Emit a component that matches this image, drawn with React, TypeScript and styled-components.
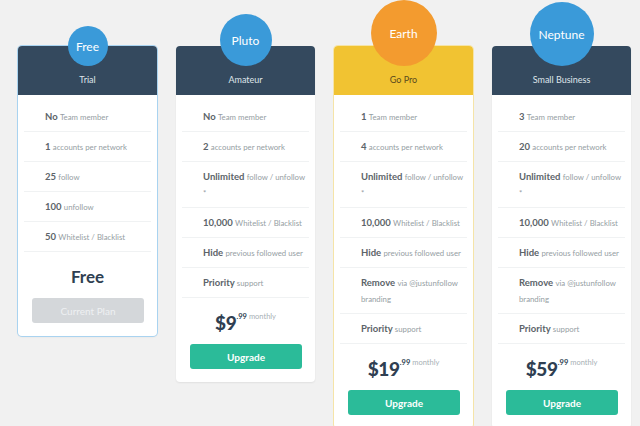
import React from "react";
import styled, { createGlobalStyle, css } from "styled-components";

const Global = createGlobalStyle`
  html, body { margin: 0; padding: 0; background: #f1f1f1; }
  body { font-family: Lato, "Open Sans", "Liberation Sans", sans-serif; -webkit-font-smoothing: antialiased; }
`;

type Variant = "current" | "plain" | "featured";

interface Feature { strong: string; light: React.ReactNode; }
interface Plan {
  badge: string;
  size: number;
  title: string;
  variant: Variant;
  features: Feature[];
  whole?: string;
  button: string;
}

const Page = styled.div`
  display: flex;
  align-items: flex-start;
  gap: 19px;
  padding: 46px 0 0 18px;
  width: 640px;
  height: 426px;
  box-sizing: border-box;
  overflow: hidden;
`;

const Card = styled.div<{ $variant: Variant }>`
  width: 139px;
  flex: none;
  background: #fff;
  border-radius: 4px;
  box-shadow: 0 1px 2px rgba(0, 0, 0, 0.07);
  ${(p) =>
    p.$variant === "current" &&
    css`
      box-shadow: 0 0 0 1px #a9d3f0, 0 1px 2px rgba(0, 0, 0, 0.08);
    `}
  ${(p) =>
    p.$variant === "featured" &&
    css`
      box-shadow: 0 0 0 1px #f5e4a8, 0 1px 2px rgba(0, 0, 0, 0.06);
    `}
`;

const Header = styled.div<{ $variant: Variant }>`
  height: 49px;
  border-radius: 4px 4px 0 0;
  background: ${(p) => (p.$variant === "featured" ? "#f1c332" : "#34495e")};
  display: flex;
  flex-direction: column;
  align-items: center;
`;

const Badge = styled.div<{ $size: number; $featured: boolean }>`
  width: ${(p) => p.$size}px;
  height: ${(p) => p.$size}px;
  margin-top: ${(p) => 20 - p.$size}px;
  border-radius: 50%;
  background: ${(p) => (p.$featured ? "#f39b2f" : "#3a9ad9")};
  color: #fff;
  font-size: 12px;
  font-weight: 400;
  display: flex;
  align-items: center;
  justify-content: center;
  flex: none;
`;

const Title = styled.div<{ $featured: boolean }>`
  margin-top: 8px;
  font-size: 9px;
  line-height: 12px;
  color: ${(p) => (p.$featured ? "#5b4a1e" : "#dfe5ea")};
`;

const List = styled.ul`
  list-style: none;
  margin: 0;
  padding: 7px 6px 0;
`;

const Row = styled.li`
  padding: 7px 0 6px 21px;
  line-height: 16px;
  border-bottom: 1px solid #f0f2f3;
  font-size: 9.5px;
  font-weight: 700;
  color: #5c6469;
  white-space: nowrap;
`;

const Light = styled.span`
  font-size: 7.8px;
  line-height: 1;
  font-weight: 400;
  color: #959ea3;
`;

const PriceBox = styled.div`
  padding: 13px 0 0;
  height: 22px;
  display: flex;
  justify-content: center;
  align-items: center;
  box-sizing: content-box;
  margin-bottom: 11px;
  color: #2f3f52;
`;

const FreeLabel = styled.span`
  font-size: 17px;
  font-weight: 700;
`;

const Whole = styled.span`
  font-size: 19px;
  font-weight: 900;
  letter-spacing: -0.3px;
`;

const Sup = styled.span`
  align-self: flex-start;
  margin-top: 1px;
  font-size: 7.5px;
  font-weight: 700;
`;

const Monthly = styled.span`
  align-self: flex-start;
  margin-top: 1px;
  margin-left: 2px;
  font-size: 7.5px;
  color: #a7b0b5;
`;

const Button = styled.button<{ $disabled: boolean }>`
  display: block;
  width: calc(100% - 27px);
  height: 25px;
  margin: 0 13px 13px 14px;
  border: none;
  border-radius: 3px;
  font-family: inherit;
  font-size: 10px;
  font-weight: ${(p) => (p.$disabled ? 400 : 700)};
  background: ${(p) => (p.$disabled ? "#d4d7da" : "#2bbb99")};
  color: ${(p) => (p.$disabled ? "#eef0f2" : "#fff")};
  padding: 0;
`;

const plans: Plan[] = [
  {
    badge: "Free",
    size: 40,
    title: "Trial",
    variant: "current",
    features: [
      { strong: "No", light: "Team member" },
      { strong: "1", light: "accounts per network" },
      { strong: "25", light: "follow" },
      { strong: "100", light: "unfollow" },
      { strong: "50", light: "Whitelist / Blacklist" },
    ],
    button: "Current Plan",
  },
  {
    badge: "Pluto",
    size: 52,
    title: "Amateur",
    variant: "plain",
    features: [
      { strong: "No", light: "Team member" },
      { strong: "2", light: "accounts per network" },
      { strong: "Unlimited", light: <>follow / unfollow<br />*</> },
      { strong: "10,000", light: "Whitelist / Blacklist" },
      { strong: "Hide", light: "previous followed user" },
      { strong: "Priority", light: "support" },
    ],
    whole: "$9",
    button: "Upgrade",
  },
  {
    badge: "Earth",
    size: 66,
    title: "Go Pro",
    variant: "featured",
    features: [
      { strong: "1", light: "Team member" },
      { strong: "4", light: "accounts per network" },
      { strong: "Unlimited", light: <>follow / unfollow<br />*</> },
      { strong: "10,000", light: "Whitelist / Blacklist" },
      { strong: "Hide", light: "previous followed user" },
      { strong: "Remove", light: <>via @justunfollow<br />branding</> },
      { strong: "Priority", light: "support" },
    ],
    whole: "$19",
    button: "Upgrade",
  },
  {
    badge: "Neptune",
    size: 64,
    title: "Small Business",
    variant: "plain",
    features: [
      { strong: "3", light: "Team member" },
      { strong: "20", light: "accounts per network" },
      { strong: "Unlimited", light: <>follow / unfollow<br />*</> },
      { strong: "10,000", light: "Whitelist / Blacklist" },
      { strong: "Hide", light: "previous followed user" },
      { strong: "Remove", light: <>via @justunfollow<br />branding</> },
      { strong: "Priority", light: "support" },
    ],
    whole: "$59",
    button: "Upgrade",
  },
];

export default function App() {
  return (
    <>
      <Global />
      <Page>
        {plans.map((p) => (
          <Card key={p.badge} $variant={p.variant}>
            <Header $variant={p.variant}>
              <Badge $size={p.size} $featured={p.variant === "featured"}>
                {p.badge}
              </Badge>
              <Title $featured={p.variant === "featured"}>{p.title}</Title>
            </Header>
            <List>
              {p.features.map((f, i) => (
                <Row key={i}>
                  {f.strong} <Light>{f.light}</Light>
                </Row>
              ))}
            </List>
            <PriceBox>
              {p.whole ? (
                <>
                  <Whole>{p.whole}</Whole>
                  <Sup>.99</Sup>
                  <Monthly>monthly</Monthly>
                </>
              ) : (
                <FreeLabel>Free</FreeLabel>
              )}
            </PriceBox>
            <Button $disabled={p.variant === "current"}>{p.button}</Button>
          </Card>
        ))}
      </Page>
    </>
  );
}
